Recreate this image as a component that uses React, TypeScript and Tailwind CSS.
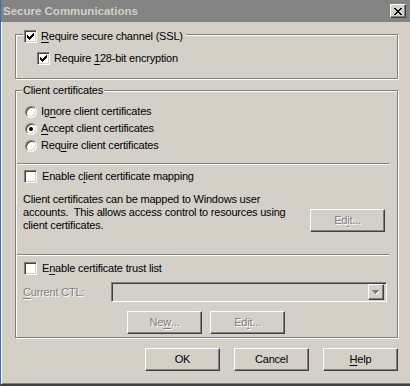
import React from 'react';

const raised =
  'border border-t-white border-l-white border-r-[#404040] border-b-[#404040] shadow-[inset_-1px_-1px_0_#808080]';
const sunken =
  'border border-t-[#808080] border-l-[#808080] border-r-white border-b-white shadow-[inset_1px_1px_0_#404040,inset_-1px_-1px_0_#d4d0c8]';
const groupBox =
  'border border-[#808080] shadow-[1px_1px_0_#fff,inset_1px_1px_0_#fff]';
const disabledText = 'text-[#808080] [text-shadow:1px_1px_0_#fff]';

function Key({ children }: { children: React.ReactNode }) {
  return <span className="underline underline-offset-[2px]">{children}</span>;
}

function CheckBox({ checked }: { checked?: boolean }) {
  return (
    <div className={`w-[13px] h-[13px] shrink-0 bg-white flex items-center justify-center ${sunken}`}>
      {checked && (
        <svg width="7" height="7" viewBox="0 0 7 7" shapeRendering="crispEdges">
          <path
            d="M6 0h1v1h-1zM5 1h2v1h-2zM0 2h1v1h-1zM4 2h3v1h-3zM0 3h2v1h-2zM3 3h3v1h-3zM0 4h5v1h-5zM1 5h3v1h-3zM2 6h1v1h-1z"
            fill="#000"
          />
        </svg>
      )}
    </div>
  );
}

function Radio({ checked }: { checked?: boolean }) {
  return (
    <div className="w-[12px] h-[12px] shrink-0 rounded-full bg-white border border-t-[#808080] border-l-[#808080] border-r-white border-b-white shadow-[inset_1px_1px_0_#404040,inset_-1px_-1px_0_#d4d0c8] flex items-center justify-center">
      {checked && <div className="w-[4px] h-[4px] rounded-full bg-black" />}
    </div>
  );
}

function Button({ children, disabled }: { children: React.ReactNode; disabled?: boolean }) {
  return (
    <div
      className={`w-[75px] h-[23px] shrink-0 bg-[#d4d0c8] flex items-center justify-center ${raised} ${
        disabled ? disabledText : 'text-black'
      }`}
    >
      {children}
    </div>
  );
}

function Separator() {
  return <div className="ml-[1px] w-[372px] h-[2px] border-t border-t-[#808080] border-b border-b-white" />;
}

export default function App() {
  return (
    <div className="w-[410px] h-[386px] bg-[#d4d0c8] border-l border-l-[#3a6ea5] border-b-2 border-b-[#404040] shadow-[inset_1px_0_0_#fff,inset_0_-1px_0_#808080] flex flex-col text-[11px] leading-[13px] tracking-[-0.2px] text-black font-['Liberation_Sans',Arial,sans-serif] overflow-hidden">
      {/* title bar */}
      <div className="h-[22px] shrink-0 bg-[#838383] flex items-center justify-between pl-[2px] pr-[4px]">
        <span className="text-[11.5px] font-bold text-[#d4d0c8] tracking-[0px]">Secure Communications</span>
        <div className={`w-[16px] h-[14px] bg-[#d4d0c8] flex items-center justify-center ${raised}`}>
          <svg width="8" height="7" viewBox="0 0 8 7" shapeRendering="crispEdges">
            <path
              d="M0 0h2v1h-2zM6 0h2v1h-2zM1 1h2v1h-2zM5 1h2v1h-2zM2 2h4v1h-4zM3 3h2v1h-2zM2 4h4v1h-4zM1 5h2v1h-2zM5 5h2v1h-2zM0 6h2v1h-2zM6 6h2v1h-2z"
              fill="#000"
            />
          </svg>
        </div>
      </div>

      <div className="pl-[14px] pt-[12px] flex flex-col">
        {/* SSL group */}
        <div className={`w-[383px] h-[45px] flex flex-col ${groupBox}`}>
          <div className="-mt-[5px] ml-[7px] pl-[1px] pr-[3px] self-start bg-[#d4d0c8] flex items-center gap-[4px] h-[13px]">
            <CheckBox checked />
            <span>
              <Key>R</Key>equire secure channel (SSL)
            </span>
          </div>
          <div className="mt-[9px] ml-[21px] flex items-center gap-[4px] h-[13px]">
            <CheckBox checked />
            <span>
              Require <Key>1</Key>28-bit encryption
            </span>
          </div>
        </div>

        {/* Client certificates group */}
        <div className={`mt-[11px] w-[383px] h-[248px] flex flex-col ${groupBox}`}>
          <div className="-mt-[7px] ml-[6px] px-[1px] self-start bg-[#d4d0c8] h-[13px]">Client certificates</div>

          <div className="mt-[6px] ml-[9px] flex flex-col">
            <div className="h-[17px] flex items-center gap-[4px]">
              <Radio />
              <span>
                Ig<Key>n</Key>ore client certificates
              </span>
            </div>
            <div className="h-[17px] flex items-center gap-[4px]">
              <Radio checked />
              <span>
                <Key>A</Key>ccept client certificates
              </span>
            </div>
            <div className="h-[17px] flex items-center gap-[4px]">
              <Radio />
              <span>
                Req<Key>u</Key>ire client certificates
              </span>
            </div>
          </div>

          <div className="mt-[9px]">
            <Separator />
          </div>

          <div className="mt-[5px] ml-[8px] h-[13px] flex items-center gap-[5px]">
            <CheckBox />
            <span>
              Enable c<Key>l</Key>ient certificate mapping
            </span>
          </div>

          <div className="mt-[10px] ml-[7px] flex items-start">
            <p className="w-[287px] shrink-0">
              Client certificates can be mapped to Windows user
              <br />
              accounts.&nbsp; This allows access control to resources using
              <br />
              client certificates.
            </p>
            <div className="mt-[16px]">
              <Button disabled>
                Ed<Key>i</Key>t...
              </Button>
            </div>
          </div>

          <div className="mt-[22px]">
            <Separator />
          </div>

          <div className="mt-[6px] ml-[8px] h-[13px] flex items-center gap-[5px]">
            <CheckBox />
            <span>
              E<Key>n</Key>able certificate trust list
            </span>
          </div>

          <div className="mt-[7px] ml-[7px] flex items-center">
            <span className={`w-[88px] shrink-0 ${disabledText}`}>
              <Key>C</Key>urrent CTL:
            </span>
            <div className={`w-[276px] h-[20px] bg-[#d4d0c8] flex items-center justify-end pr-[2px] ${sunken}`}>
              <div className={`w-[16px] h-[16px] bg-[#d4d0c8] flex items-center justify-center ${raised}`}>
                <svg width="8" height="5" viewBox="0 0 8 5" shapeRendering="crispEdges">
                  <path d="M1 1h7v1h-1v1h-1v1h-1v1h-1v-1h-1v-1h-1v-1h-1z" fill="#fff" />
                  <path d="M0 0h7v1h-1v1h-1v1h-1v1h-1v-1h-1v-1h-1v-1h-1z" fill="#808080" />
                </svg>
              </div>
            </div>
          </div>

          <div className="mt-[9px] ml-[111px] flex gap-[8px]">
            <Button disabled>
              Ne<Key>w</Key>...
            </Button>
            <Button disabled>
              Ed<Key>i</Key>t...
            </Button>
          </div>
        </div>

        {/* dialog buttons */}
        <div className="mt-[10px] ml-[130px] flex gap-[14px]">
          <Button>OK</Button>
          <Button>Cancel</Button>
          <Button>
            <Key>H</Key>elp
          </Button>
        </div>
      </div>
    </div>
  );
}
